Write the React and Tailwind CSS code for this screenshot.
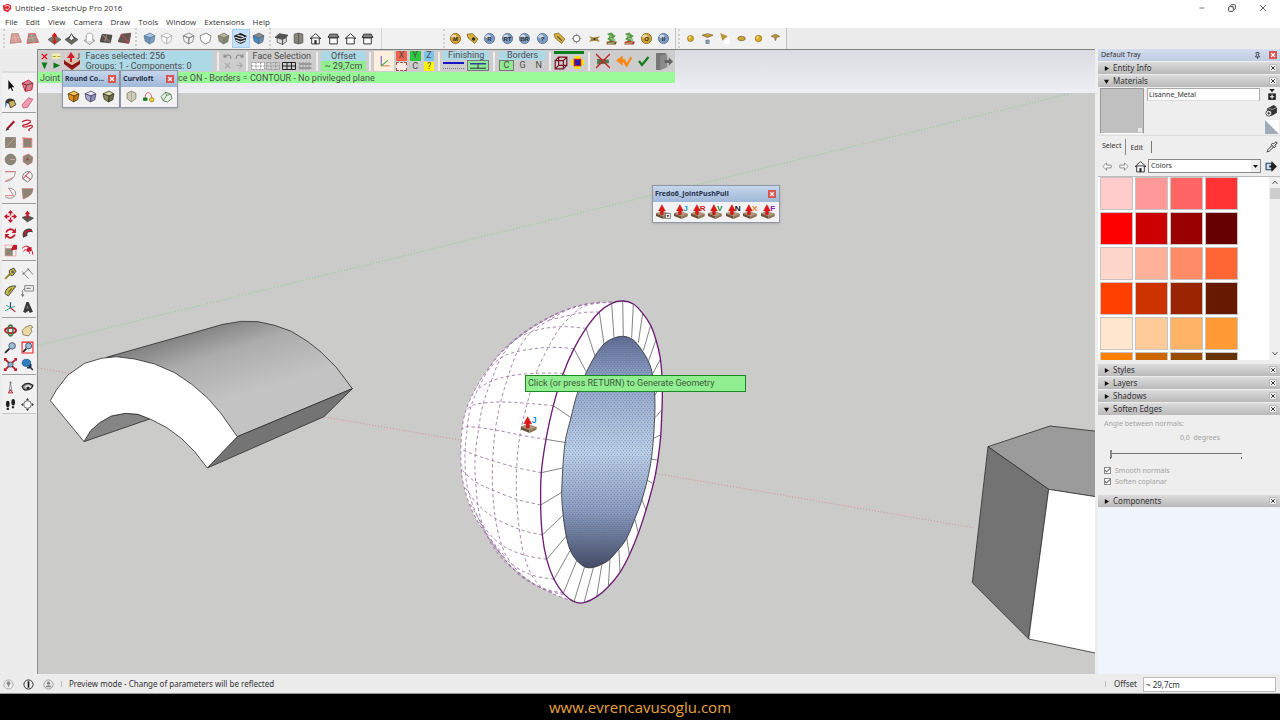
import React, { useState } from 'react';
import { X, Check, Pin, Undo, Redo, ArrowRight, Pipette, Minus, Copy } from 'lucide-react';

const Icon = ({ children, className = 'w-[13px] h-[13px]' }) => (
  <svg viewBox="0 0 12 12" className={`${className} shrink-0`} fill="none" aria-hidden="true">
    {children}
  </svg>
);

const ToolButton = ({ label, active, children }) => (
  <button
    type="button"
    title={label}
    aria-label={label}
    className={`w-4 h-[17px] shrink-0 flex items-center justify-center ${active ? 'bg-[#c5e0f8] outline outline-[#a5cdf0]' : ''}`}
  >
    {children}
  </button>
);

/* ---------- shared icon shapes ---------- */

const Patch = ({ fill = '#77756b', line = '#b33', children }) => (
  <Icon>
    <path d="M2.500 1.500L8.500 1.500 11.500 9.500 1 10.500z" fill={fill} stroke={line} strokeWidth=".6" />
    <path d="M4.500 2l2.500 8M2 6l8-1" stroke="#ffffff66" strokeWidth=".5" />
    {children}
  </Icon>
);

const Cube = ({ top = '#fff', left = '#eee', right = '#ddd', line = '#555' }) => (
  <Icon>
    <g stroke={line} strokeWidth=".7" strokeLinejoin="round">
      <path d="M1 3.500L6.500 1l4.500 2.500-4.500 2z" fill={top} />
      <path d="M1 3.500l5.500 2L6 11 2 8.500z" fill={left} />
      <path d="M6.500 5.500L11 3.500l-1 5.500-4 2z" fill={right} />
    </g>
  </Icon>
);

const House = ({ fill = '#fff', door = '#222', flat }) => (
  <Icon>
    <path d={flat ? 'M1 5l1.500-3h7L11 5z' : 'M1 6l5-4.500L11 6z'} fill={flat ? '#888' : fill} stroke="#333" strokeWidth=".9" />
    <path d="M2.500 5.500h7V11h-7z" fill={fill} stroke="#333" strokeWidth=".9" />
    {door && <path d="M5 7.500h2V11H5z" fill={door} />}
  </Icon>
);

const Ball = ({ letter, gold }) => (
  <Icon>
    <circle cx="6" cy="6" r="4.700" fill={gold ? '#d0a030' : '#7d9cc4'} stroke={gold ? '#7b5a10' : '#4a6284'} strokeWidth=".7" />
    <ellipse cx="4.500" cy="4" rx="2.400" ry="1.700" fill="#ffffff99" />
    <text x="6" y="8" textAnchor="middle" fontSize="5.500" fontWeight="bold" fontFamily="Liberation Sans, sans-serif" fill="#2a2a2a">{letter}</text>
  </Icon>
);

const Dot = ({ r = 2.8 }) => (
  <Icon>
    <circle cx="6" cy="6" r={r} fill="#d8a922" stroke="#86681a" strokeWidth=".6" />
    <circle cx="5.200" cy="5" r="1" fill="#fff0a0" />
  </Icon>
);

const Scatter = ({ low = '#7a5a2a' }) => (
  <Icon>
    <path d="M2 1.500l4-1 2 2 2 1-2 2 2 2-5 1-3-2 2-2z" fill="#5a9b4c" />
    <path d="M1.500 9l4-1 5.500 1-1 2.500H1.500z" fill={low} />
    <path d="M3 3l3 1M5 6l4 1M2.500 10.500l6-.5" stroke="#d5eab8" strokeWidth=".7" />
  </Icon>
);

const PushPull = ({ letter, color, className }) => (
  <Icon className={className || 'w-[15px] h-[15px]'}>
    <path d="M0 7.500l5-1.500L11 8 6 10z" fill="#b59a7c" stroke="#6b543f" strokeWidth=".3" />
    <path d="M0 7.500L6 10v2L0 9.500z" fill="#6b5038" />
    <path d="M6 10l5-2v1.700L6 12z" fill="#8d7256" />
    <path d="M3.700 8.500V5.500H2L4.700.500 7.500 5.500H5.800v3z" fill="#e01818" stroke="#a00" strokeWidth=".3" />
    {letter ? (
      <text x="9.300" y="5.200" textAnchor="middle" fontSize="6.500" fontWeight="bold" fontFamily="Liberation Sans, sans-serif" fill={color}>{letter}</text>
    ) : (
      <>
        <path d="M7.500 7.500h4v4h-4z" fill="#fff" stroke="#333" strokeWidth=".5" />
        <path d="M8.300 9h2.400L9.500 10.600z" fill="#111" />
      </>
    )}
  </Icon>
);

/* ---------- top toolbar ---------- */

const Grip = () => <span className="w-0.5 h-[19px] border-l-2 border-dotted border-[#d0d0d0]" />;
const Divider = () => <span className="w-px h-[17px] bg-[#a8a8a8]" />;

const TopToolbar = () => (
  <div className="h-[21px] flex bg-[#ececec]" role="toolbar" aria-label="Main toolbar">
    <div className="w-[382px] pl-[3px] flex items-center bg-[#f1f1f1] border-r border-[#d2d2d2]">
      <Grip />
      <div className="w-[33px] ml-0.5 flex justify-between">
        <ToolButton label="From Contours"><Patch fill="#d99c94" line="#a77" /></ToolButton>
        <ToolButton label="From Scratch"><Patch fill="#a09488" line="#d33" /></ToolButton>
      </div>
      <span className="mx-[3px]"><Divider /></span>
      <div className="w-[86px] flex justify-between">
        <ToolButton label="Smoove"><Icon><path d="M0 7l6-4 6 4-6 4.500z" fill="#77756b" stroke="#444" strokeWidth=".5" /><path d="M6 9V2M4 4l2-2.500L8 4M4.500 8L6 10l1.500-2" stroke="#d11" strokeWidth="1.300" /></Icon></ToolButton>
        <ToolButton label="Stamp"><Icon><path d="M0 7l6-4 6 4-6 4.500z" fill="#6a685f" stroke="#333" strokeWidth=".5" /><path d="M3.500 6L6 1.500 8.500 6 6 8z" fill="#eee" stroke="#222" strokeWidth=".7" /></Icon></ToolButton>
        <ToolButton label="Drape"><Icon><path d="M1 8l5-3 5 3-5 3.500z" fill="#ddd" stroke="#777" strokeWidth=".6" /><path d="M3 8V3c1-2.500 5-2.500 6 0v5" fill="#fff" stroke="#999" strokeWidth=".8" /></Icon></ToolButton>
        <ToolButton label="Add Detail"><Icon><path d="M2 2l9 1-1.500 7L0 9z" fill="#55534b" stroke="#222" strokeWidth=".6" /><path d="M2 2l7.500 8M6 2.500L4.500 9.500" stroke="#c99" strokeWidth=".7" /></Icon></ToolButton>
        <ToolButton label="Flip Edge"><Icon><path d="M3 2l9-1-2 9.500L0 9z" fill="#605a55" stroke="#733" strokeWidth=".6" /><path d="M3 2l7 8" stroke="#c44" /></Icon></ToolButton>
      </div>
      <span className="ml-[3px] mr-1"><Grip /></span>
      <div className="w-[33px] flex justify-between">
        <ToolButton label="X-Ray"><Cube top="#a9c3dc" left="#6f92b5" right="#7fa1c3" line="#5a7a9a" /></ToolButton>
        <ToolButton label="Back Edges"><Cube top="#fff" left="#fafafa" right="#f4f4f4" line="#aaa" /></ToolButton>
      </div>
      <span className="mx-[3px]"><Divider /></span>
      <div className="w-[86px] flex justify-between">
        <ToolButton label="Wireframe"><Cube top="none" left="none" right="none" line="#777" /></ToolButton>
        <ToolButton label="Hidden Line"><Icon><path d="M1 3.500L6.500 1 11 3.500 10 9l-4 2-4-2.500z" fill="#fff" stroke="#777" strokeWidth=".8" /></Icon></ToolButton>
        <ToolButton label="Shaded"><Cube top="#b5b5a0" left="#8f8f7c" right="#84846f" line="#77776a" /></ToolButton>
        <ToolButton label="Shaded With Textures" active>
          <Icon>
            <path d="M0 3.500L6 1l5.500 2.500-1 5.500L6 11 1.500 8.500z" fill="#222" />
            <path d="M3 2.800l6 1.700M1 4.800l5.300 1.700 4.700-1.700M1.500 7.500L6 9.300l4.500-1.600" stroke="#dfe8ef" strokeWidth="1" />
          </Icon>
        </ToolButton>
        <ToolButton label="Monochrome"><Cube top="#8f8f86" left="#3d8ad0" right="#6f8fae" line="#567" /></ToolButton>
      </div>
      <span className="ml-[3px] mr-0.5"><Grip /></span>
      <div className="w-[103px] flex justify-between">
        <ToolButton label="Iso"><Icon><path d="M0 5l4-3.500L12 3 8.500 6.500z" fill="#555" stroke="#333" strokeWidth=".6" /><path d="M2 5.500l5 1.500v4.500l-5-2zM7 7l3.500-2v4L7 11.500z" fill="#ddd" stroke="#444" strokeWidth=".7" /></Icon></ToolButton>
        <ToolButton label="Top"><Icon><path d="M2 2l4-1 4 1v8l-4 1-4-1z" fill="#85857b" stroke="#555" strokeWidth=".7" /><path d="M6 1v10" stroke="#555" strokeWidth=".8" /></Icon></ToolButton>
        <ToolButton label="Front"><House /></ToolButton>
        <ToolButton label="Right"><House flat door="" /></ToolButton>
        <ToolButton label="Back"><House door="" /></ToolButton>
        <ToolButton label="Left"><House flat door="" /></ToolButton>
      </div>
    </div>
    <div className="w-[294px] pl-[61px] flex items-center border-r border-[#c4c4c4] bg-[#f1f1f1]">
      <Grip />
      <div className="w-[225px] ml-0.5 flex justify-between">
        <ToolButton label="Material"><Ball letter="M" gold /></ToolButton>
        <ToolButton label="Options"><Icon><path d="M1 2l5-.5 5 5-3 4-6-5z" fill="#d9b23a" stroke="#775c16" strokeWidth=".7" /><circle cx="7" cy="6.500" r="1.600" fill="#333" /></Icon></ToolButton>
        <ToolButton label="Render"><Ball letter="R" /></ToolButton>
        <ToolButton label="Real-time"><Ball letter="RT" /></ToolButton>
        <ToolButton label="Batch"><Ball letter="BR" /></ToolButton>
        <ToolButton label="Help"><Ball letter="?" /></ToolButton>
        <ToolButton label="Tag"><Icon><path d="M1 2l4-1 6 5.500-3 4-6-5z" fill="#d9b23a" stroke="#775c16" strokeWidth=".7" /><path d="M4 4l4 4" stroke="#444" /></Icon></ToolButton>
        <ToolButton label="Sphere"><Icon><circle cx="6" cy="6" r="3" fill="#f8f8f8" stroke="#777" /><path d="M6 1.500v1.500M6 9v1.500M1.500 6H3M9 6h1.500" stroke="#888" strokeWidth=".8" /></Icon></ToolButton>
        <ToolButton label="Plane"><Icon><path d="M1 4l4 1 6-1-2 2.500L11 9 6 8 1 9l2-2.500z" fill="#a8843a" /><circle cx="6" cy="6.500" r="1" fill="#333" /></Icon></ToolButton>
        <ToolButton label="Scatter"><Scatter /></ToolButton>
        <ToolButton label="Proxy"><Scatter low="#b0402a" /></ToolButton>
        <ToolButton label="Light"><Ball letter="O" gold /></ToolButton>
        <ToolButton label="Frame buffer"><Ball letter="II" /></ToolButton>
      </div>
    </div>
    <div className="w-[111px] pl-0.5 flex items-center border-r border-[#c4c4c4] bg-[#f1f1f1]">
      <Grip />
      <div className="w-[101px] ml-0.5 flex justify-between">
        <ToolButton label="Omni light"><Dot /></ToolButton>
        <ToolButton label="Rectangle light"><Icon><path d="M1 3l5-1.500L11 3 6 5z" fill="#c9a33a" stroke="#6a5420" strokeWidth=".6" /><path d="M4.500 7.500h3v3h-3z" fill="#8fa6c6" stroke="#567" strokeWidth=".6" /></Icon></ToolButton>
        <ToolButton label="Spot light"><Icon><path d="M6 6l5-1v6H6z" fill="#fff" /><path d="M2 1l7 3-5 4z" fill="#b8963a" /></Icon></ToolButton>
        <ToolButton label="Dome light"><Icon><ellipse cx="6" cy="6" rx="3.500" ry="2" fill="#c8a63a" stroke="#6a5420" strokeWidth=".6" /></Icon></ToolButton>
        <ToolButton label="Sphere light"><Dot r={3} /></ToolButton>
        <ToolButton label="IES light"><Icon><path d="M2 4l4-2 4 2-3 1-1 3-1-3z" fill="#b8963a" stroke="#6a5420" strokeWidth=".5" /></Icon></ToolButton>
      </div>
    </div>
  </div>
);

/* ---------- left toolbar ---------- */

const R = '#c4182c';
const leftGroups = [
  [
    ['Select', <path d="M4 1v9l2-2 1.500 3 1-.5L7 7.500h2.500z" fill="#111" />],
    ['Make Component', <><path d="M1 4l6-3 4 3-1 6-6 1.500z" fill="#d5808a" stroke={R} strokeWidth=".8" /><path d="M1 4l4 1.500 6-1.500M5 5.500L4 11" stroke="#7c2030" strokeWidth=".8" /></>],
    ['Paint Bucket', <><path d="M1 6c1-4 5-5 9-2l-2 4z" fill="#3a3a3a" /><path d="M4 5l5-1 2 4-5 3z" fill="#c9b45a" stroke="#222" strokeWidth=".7" /><path d="M1 6v5l2-4z" fill="#3b87c4" /></>],
    ['Eraser', <path d="M1 8l6-6.500L11 3 6 10.500l-4 .5z" fill="#f09ab0" stroke="#b85870" strokeWidth=".7" />],
  ],
  [
    ['Line', <><path d="M3 9L9.500 2" stroke={R} strokeWidth="2" /><path d="M1.500 11l1-3L5 9.500z" fill="#333" /><path d="M4 8l5-5" stroke="#333" strokeWidth=".7" /></>],
    ['Freehand', <path d="M1 2.500C5 0 11 1 8 3.500S0 5 2 7s8-3 8.500-.5S5 9 8 11" stroke={R} strokeWidth="1.100" />],
    ['Rectangle', <><path d="M1 1h10v10H1z" fill="#8c8677" /><path d="M2 10l8-8" stroke="#d99" strokeWidth=".8" /></>],
    ['Rotated Rectangle', <><path d="M2 2h8v8.500H2z" fill="#8c8677" stroke="#e88" strokeWidth=".8" /><path d="M1 1.500l9 2" stroke="#d55" strokeWidth=".7" /></>],
    ['Circle', <><circle cx="6" cy="6" r="5" fill="#8c8677" stroke="#68645a" strokeWidth=".5" /><path d="M6 6h4" stroke="#daa" strokeWidth=".9" /></>],
    ['Polygon', <><path d="M2 3l5-2 4 3-1 5-4 2-4-3z" fill="#8c8677" stroke="#c77" strokeWidth=".7" /><circle cx="6" cy="6" r=".9" fill={R} /></>],
    ['Arc', <><path d="M1 1.500h9.500C10 7 7 10 1 10.500" stroke="#777" strokeWidth=".7" /><path d="M1 1.500h9M1 10.500L8 7" stroke="#e0707a" strokeWidth=".8" /></>],
    ['2 Point Arc', <><path d="M1.500 8C1 3 5 1 8 1.500c3 2 3 5 1 7L6 11z" stroke="#555" strokeWidth=".7" /><path d="M2 8l6-6.500M4 5l5 4" stroke={R} strokeWidth=".8" /></>],
    ['3 Point Arc', <><path d="M4 1c6 0 8 4 6 7s-6 3-9 1" stroke="#777" strokeWidth=".7" /><path d="M4 1l5 7H1" stroke="#e0707a" strokeWidth=".8" /></>],
    ['Pie', <path d="M1 1.500h10C11 7 7 9 2 11z" fill="#8c8677" stroke="#c77" strokeWidth=".7" />],
  ],
  [
    ['Move', <><path d="M6 1v10M1 6h10" stroke={R} strokeWidth="1.200" strokeDasharray="4 2" /><path d="M6 0l2.500 3h-5zM6 12l2.500-3h-5zM0 6l3-2.500v5zM12 6L9 3.500v5z" fill={R} /></>],
    ['Push/Pull', <><path d="M1 7l5-2 5.500 2.500L6 11z" fill="#5c584d" stroke="#333" strokeWidth=".5" /><path d="M5 7.500V4H3.500L6 .5 8.500 4H7v3.500z" fill={R} /></>],
    ['Rotate', <><path d="M2 5c1-3 5-4 7-1.500M10 7c-1 3-5 4-7 1.500" stroke={R} strokeWidth="1.700" /><path d="M11 1v4.500H7zM1 11V6.500h4z" fill={R} /></>],
    ['Follow Me', <><path d="M2 10C0 4 5 0 10 2l1 3C7 4 5 5 6 8z" fill="#444" /><path d="M3 8c0-4 3-5 7-5" stroke={R} strokeWidth="1.300" /></>],
    ['Scale', <><path d="M1 4h7v7H1z" fill="#8c8677" /><path d="M1 1h10v10H1z" stroke="#d88" strokeWidth=".6" /><path d="M6 6l2.500-5H12v4z" fill={R} /></>],
    ['Offset', <><path d="M1 4c4-4 9-2 10 6M2 7c2-3 5-2 6 2" stroke={R} strokeWidth=".9" /><path d="M5 7l1-4h4L9 7z" fill={R} /></>],
  ],
  [
    ['Tape Measure', <><path d="M5 3l4-2 2 3-3 4-3-1z" fill="#c8bd40" stroke="#444" strokeWidth=".9" /><path d="M1 11l5-5" stroke="#8f8730" strokeWidth="1.700" /><circle cx="8" cy="4.500" r="1.200" fill="#555" /></>],
    ['Dimension', <path d="M2 6.500L7 2M1 4l6 7M6 1l5 6M1 7l2-1M8 3L6 2" stroke="#666" strokeWidth=".7" />],
    ['Protractor', <path d="M1 9C1 4 6 1 11 2L4 11z M4 8l3-4" fill="#c8bd40" stroke="#444" strokeWidth=".9" />],
    ['Text', <><path d="M3.500 1.500h8v5h-8zM3.500 4L1.500 6v5" stroke="#666" strokeWidth=".7" /><path d="M5 4h4M.5 9.500l1 2 1-2" stroke="#555" strokeWidth=".8" /></>],
    ['Axes', <><path d="M6 7V1" stroke="#248" strokeWidth="1" /><path d="M6 6.500L10.500 10" stroke={R} /><path d="M6 6.500L1 9M2 4l4 2 4-1" stroke="#297" strokeWidth=".8" /></>],
    ['3D Text', <><path d="M5 1h2l4 9-3 1-1-2-3 2-2-1z" fill="#3b3b3b" /><path d="M6 4l1 3H5z" fill="#888" /></>],
  ],
  [
    ['Orbit', <><ellipse cx="6" cy="6" rx="5" ry="2.500" stroke={R} strokeWidth="1.800" /><ellipse cx="6" cy="6" rx="2.300" ry="5" stroke="#387a48" strokeWidth="1.500" /></>],
    ['Pan', <path d="M2 10l-1-4 3-3 5-2 2 2-2 1 1 3-3 4z" fill="#ead9a4" stroke="#776a44" strokeWidth=".7" />],
    ['Zoom', <><path d="M1 11l4-4" stroke="#222" strokeWidth="1.600" /><circle cx="7.500" cy="4.500" r="3" fill="#9bbdd6" stroke="#557" strokeWidth=".9" /></>],
    ['Zoom Window', <><path d="M1 1h10v10H1z" stroke="#e22" strokeWidth="1" /><path d="M2 10l3-3" stroke="#222" strokeWidth="1.500" /><circle cx="7" cy="4.500" r="2.800" fill="#9bbdd6" stroke="#446" strokeWidth=".8" /></>],
    ['Zoom Extents', <><path d="M1 1l10 10M11 1L1 11" stroke={R} strokeWidth="1.600" /><circle cx="6" cy="6" r="2.400" fill="#8fb0c8" stroke="#345" strokeWidth=".7" /><path d="M0 0h3L0 3zM12 0v3L9 0zM0 12V9l3 3zM12 12H9l3-3z" fill={R} /></>],
    ['Previous', <><ellipse cx="5" cy="4.500" rx="4" ry="3.300" fill="#2d7dc0" stroke="#1d507c" strokeWidth=".6" /><path d="M7 7l4 4M9 5.500V9H5.500" stroke="#234" strokeWidth="1.400" /></>],
  ],
  [
    ['Position Camera', <><circle cx="6" cy="1.500" r="1" fill="#777" /><path d="M6 2l1.300 7H4.700z" fill="#fff" stroke="#777" strokeWidth=".7" /><path d="M4 11l2-3 2 3z" stroke={R} strokeWidth=".9" /></>],
    ['Look Around', <><path d="M1 5c3-3.500 7-3 10-1-1 4-7 6-9 3z" fill="#999" stroke="#222" strokeWidth="1.100" /><path d="M4 6c1-2 4-2 5 0" stroke="#fff" /><circle cx="6.500" cy="6.500" r="1.300" fill="#222" /></>],
    ['Walk', <><ellipse cx="3.500" cy="5.500" rx="1.700" ry="3" fill="#222" /><ellipse cx="8.500" cy="4" rx="1.700" ry="3" fill="#222" /><path d="M2.500 9h2v2h-2zM7.300 7.500h2v2h-2z" fill="#222" /></>],
    ['Section Plane', <><circle cx="6" cy="6" r="3.500" fill="#fff" stroke="#555" strokeWidth=".8" /><path d="M6 0l1.500 2h-3zM6 12l1.500-2h-3zM0 6l2-1.500v3zM12 6l-2-1.500v3z" fill="#333" /></>],
  ],
];

const LeftToolbar = () => (
  <div className="w-[38px] shrink-0 pt-[22px] pl-0.5 bg-[#ececec] border-r border-[#8e8e8e]" role="toolbar" aria-label="Large tool set">
    <div className="w-[34px] bg-[#f1f1f1] border-b border-[#c8c8c8] border-t-2 border-t-[#dcdcdc]">
      {leftGroups.map((group, i) => (
        <div key={i} className={`grid grid-cols-2 pt-1 ${i < 5 ? 'border-b border-[#a0a0a0] pb-px' : ''}`}>
          {group.map(([label, art]) => (
            <ToolButton key={label} label={label}><Icon>{art}</Icon></ToolButton>
          ))}
        </div>
      ))}
    </div>
  </div>
);

/* ---------- 3D scene ---------- */

// Catmull-Rom through "x,y x,y ..." points, returned as a cubic path
const smooth = (points, closed) => {
  const p = points.split(' ').map((s) => s.split(',').map(Number));
  const n = p.length;
  const at = (i) => (closed ? p[(i + n) % n] : p[Math.max(0, Math.min(n - 1, i))]);
  let d = `M${p[0]}`;
  for (let i = 0; i < (closed ? n : n - 1); i++) {
    const [a, b, c, e] = [at(i - 1), at(i), at(i + 1), at(i + 2)];
    d += `C${b[0] + (c[0] - a[0]) / 6},${b[1] + (c[1] - a[1]) / 6} ${c[0] - (e[0] - b[0]) / 6},${c[1] - (e[1] - b[1]) / 6} ${c}`;
  }
  return d;
};

const rim = smooth('548,33 580,42 608,70 632,106 648,150 660,200 666,260 667,320 665,380 662,440 655,500 645,560 632,612 618,660 595,730 568,795 540,847 505,890 470,920 432,938 402,935 370,910 342,868 320,808 307,735 302,645 304,548 318,448 340,347 368,255 402,176 438,115 478,66 515,40', true);
const hole = smooth('550,139 580,150 605,180 628,220 640,270 645,340 642,420 635,500 622,570 604,635 585,685 560,745 530,785 500,815 455,833 425,825 395,790 378,735 367,650 366,580 375,460 393,383 412,310 440,245 465,198 492,162 520,145', true);
const spokes = 'M548 33L550 139M515 40L522 143M478 66L492 162M438 115L465 198M402 176L440 248M370 250L415 300M340 347L393 383M318 448L378 458M304 548L368 534M302 645L367 606M307 735L369 676M320 808L380 737M342 868L390 782M370 910L410 812M402 935L434 830M432 938L460 833M470 920L485 826M505 890L510 806M540 847L537 780M568 795L560 742M595 730L585 688M618 660L604 625M637 580L618 568M653 510L636 508M661 435L641 445M665 360L645 383M666 280L643 318M660 210L636 255M648 150L626 212M632 106L610 182M608 70L595 158M580 42L575 143';
const shell = smooth('515,36 440,42 370,62 290,105 220,155 160,215 110,290 78,360 65,430 63,520 72,590 100,670 150,750 210,825 280,880 340,912 402,935');
const parallels = [
  '478,66 425,68 380,78 320,92',
  '438,115 370,110 300,118 235,142 205,165',
  '402,176 325,172 230,185 180,205 145,240',
  '370,250 288,250 208,258 150,275 110,300',
  '340,347 262,340 182,336 110,342 80,358',
  '318,448 240,435 166,420 85,410 68,418',
  '304,548 230,533 158,512 105,495 68,480',
  '302,645 230,628 158,600 105,575 66,540',
  '307,735 238,718 166,685 115,645 75,592',
  '320,808 252,795 185,765 135,715 90,640',
  '342,868 275,855 215,822 160,765 115,690',
  '370,910 310,895 250,865 200,815 150,745',
];
const meridians = [
  '515,36 430,50 365,108 325,172 288,250 262,340 240,435 230,533 230,628 238,718 252,795 275,855 310,895 370,915',
  '480,36 400,52 320,95 270,130 232,185 205,258 182,336 166,420 158,512 158,600 166,685 185,765 215,822 270,875 340,910',
  '440,42 340,75 240,135 185,200 155,270 130,340 115,420 105,510 108,590 118,670 145,745 190,810 260,870',
  '370,62 280,110 205,165 160,215 115,295 90,360 80,430 75,500 80,580 100,650 140,730 195,800',
];

const Scene = () => (
  <svg viewBox="38 50 1057 624" preserveAspectRatio="xMidYMid slice" className="absolute inset-0 w-full h-full">
    <defs>
      <linearGradient id="sky" x1="0" y1="0" x2="0" y2="1">
        <stop offset="0" stopColor="#dadce1" />
        <stop offset="1" stopColor="#eeeff4" />
      </linearGradient>
      <linearGradient id="bowl" x1="0" y1="0" x2="0" y2="1">
        <stop offset="0" stopColor="#5f6c90" />
        <stop offset=".2" stopColor="#92a5c6" />
        <stop offset=".5" stopColor="#bcd0e4" />
        <stop offset=".75" stopColor="#8c9cbe" />
        <stop offset="1" stopColor="#444b62" />
      </linearGradient>
      <linearGradient id="vault" gradientUnits="userSpaceOnUse" x1="370" y1="90" x2="440" y2="310">
        <stop offset="0" stopColor="#808080" />
        <stop offset=".4" stopColor="#acacac" />
        <stop offset="1" stopColor="#c3c3c3" />
      </linearGradient>
      <pattern id="dots" width="9" height="12" patternUnits="userSpaceOnUse">
        <path d="M0 0h3v3H0zM4.500 6h3v3h-3z" fill="#3c52a0" fillOpacity=".4" />
      </pattern>
    </defs>
    <rect x="-1000" y="-500" width="3200" height="1800" fill="#cbcbca" />
    <rect x="-1000" y="50" width="3200" height="43" fill="url(#sky)" />
    <path d="M38 345L1068 94" stroke="#86cf86" strokeDasharray="1 2" />
    <path d="M38 368L975 528" stroke="#d88f8f" strokeDasharray="1 2" />

    <g transform="translate(38 310) scale(.33333)" stroke="#333" strokeWidth="2.500" strokeLinejoin="round">
      <path d="M205 142L555 43L610 34 660 35 710 46 760 64 810 95 850 127 895 172 943 236L598 380 300 200z" fill="url(#vault)" />
      <path d="M598 380L943 236L858 320L508 474z" fill="#747474" />
      <path d="M138 395L158 362 185 338 220 318 262 310 300 313 338 326z" fill="#858585" />
      <path d="M37 272L55 240 90 195 140 160 190 145 235 140 290 147 350 162 410 188 460 222 510 265 550 312 598 380 508 474 470 425 430 385 385 352 338 328 300 313 262 310 220 318 185 338 158 362 138 395z" fill="#fff" />
    </g>

    <g transform="translate(440 290) scale(.33333)" strokeLinejoin="round">
      <path d={shell} fill="#fff" />
      <g stroke="#9c74a3" strokeWidth="2.600" strokeDasharray="10 8" fill="none">
        <path d={shell} />
        {parallels.map((p) => <path key={p} d={smooth(p)} />)}
        {meridians.map((p) => <path key={p} d={smooth(p)} />)}
      </g>
      <path d={rim} fill="#fff" stroke="#6d1a75" strokeWidth="4" />
      <path d={spokes} stroke="#555" strokeWidth="2.200" />
      <path d={hole} fill="url(#bowl)" stroke="#333" strokeWidth="2.500" />
      <path d={hole} fill="url(#dots)" />
    </g>

    <g transform="translate(960 400) scale(.33333)" stroke="#333" strokeWidth="2.500" strokeLinejoin="round">
      <path d="M84 140L270 78 420 95V292L266 268z" fill="#9b9b9b" />
      <path d="M84 140L266 268 206 717 37 548z" fill="#737373" />
      <path d="M266 268L420 292V762L206 717z" fill="#fff" />
    </g>
  </svg>
);

/* ---------- parameter strip over the viewport ---------- */

const Sep = ({ className = '' }) => <span className={`w-0.5 h-[19px] shrink-0 bg-[#ededed] ${className}`} />;

const ParamStrip = () => (
  <div className="relative w-[637px] font-[Roboto,sans-serif] text-[9px] leading-[10px] text-[#4c4c4c]">
    <div className="h-[22px] flex items-center bg-[#cdcdcd]">
      <div className="w-[25px] grid grid-cols-2 justify-items-center">
        <button type="button" aria-label="Close"><X className="w-[9px] h-[9px] text-red-600" strokeWidth={3} /></button>
        <button type="button" aria-label="Minimize"><Icon className="w-[9px] h-[9px]"><path d="M0 2h11v7H0z" fill="#f0efb0" /><path d="M1 6h4M7 6h4" stroke="#b0a020" strokeWidth="1.500" /></Icon></button>
        <button type="button" aria-label="Down"><Icon className="w-[9px] h-[9px]"><path d="M2 2h8L6 11z" fill="#087a18" /></Icon></button>
        <button type="button" aria-label="Right"><Icon className="w-[9px] h-[9px]"><path d="M2 2v8l9-4z" fill="#087a18" /></Icon></button>
      </div>
      <div className="w-[19px] h-5 flex justify-center bg-[#d4cbc9]">
        <svg viewBox="0 0 18 20" className="w-[18px] h-5" aria-hidden="true">
          <path d="M1 9l8 5 8-5v4l-8 6-8-6z" fill="#8d1715" />
          <path d="M2 10l7 4 7-4-4-2H6z" fill="#d8bda6" />
          <path d="M7 11V7H4l4-6 4 6H9v4z" fill="#d11c2a" />
          <path d="M16 2v5c0 1-2 1-2 0" stroke="#555" fill="none" />
        </svg>
      </div>
      <div className="w-[133px] h-5 pl-1 bg-[#add8e6]">
        <p>Faces selected: 256</p>
        <p>Groups: 1 - Components: 0</p>
      </div>
      <Sep className="ml-1" />
      <div className="w-[27px] pl-0.5 grid grid-cols-2 justify-items-center text-[#8b8b8b]">
        <button type="button" aria-label="Undo"><Undo className="w-[9px] h-[9px]" strokeWidth={3} /></button>
        <button type="button" aria-label="Redo"><Redo className="w-[9px] h-[9px]" strokeWidth={3} /></button>
        <button type="button" aria-label="Clear"><X className="w-[9px] h-[9px] text-[#aaa]" strokeWidth={3} /></button>
        <button type="button" aria-label="Last"><ArrowRight className="w-[9px] h-[9px] text-[#aaa]" strokeWidth={3} /></button>
      </div>
      <Sep className="mr-[3px]" />
      <div className="w-[66px]">
        <p className="pl-0.5">Face Selection</p>
        <div className="flex justify-between pr-1">
          {['#fff', '#bbb', '#222', '#999'].map((c, i) => (
            <button key={c} type="button" aria-label={`Selection mode ${i + 1}`}>
              <svg viewBox="0 0 14 10" className="w-3.5 h-[10px]" aria-hidden="true">
                <path d={i === 3 ? 'M1 2h12v2H1zM1 6h12v2H1z' : 'M.5 1.500h13v7H.5zM.5 5h13M5 1.500v7M9.500 1.500v7'} fill={i === 0 ? '#fff' : i === 3 ? '#999' : 'none'} stroke={i === 2 ? '#222' : '#999'} strokeWidth="1" strokeDasharray={i === 2 ? undefined : '2 1'} />
              </svg>
            </button>
          ))}
        </div>
      </div>
      <Sep className="mr-[3px]" />
      <div className="w-[46px] h-5 flex flex-col text-center">
        <span className="bg-[#add8e6]">Offset</span>
        <button type="button" className="bg-[#90f090] leading-[10px]">~ 29,7cm</button>
      </div>
      <Sep className="mx-[3px]" />
      <button type="button" aria-label="Local axes" className="w-5 h-5 bg-[#fdeedd] flex items-center justify-center">
        <Icon><path d="M3 1v9" stroke="#6464c8" /><path d="M3 10h8" stroke="#c86" /><path d="M3 10l6-5" stroke="#3a3" /></Icon>
      </button>
      <div className="w-[39px] h-5 ml-0.5 grid grid-cols-3 gap-x-[3px] gap-y-px text-center leading-[9px]">
        <button type="button" className="bg-[#f4604e] leading-[9px]">X</button>
        <button type="button" className="bg-[#2ec83e] leading-[9px]">Y</button>
        <button type="button" className="bg-[#7cc4ec] leading-[9px]">Z</button>
        <button type="button" aria-label="No plane" className="bg-[#fbe9e4] border border-dashed border-[#a55]" />
        <button type="button" className="leading-[9px]">C</button>
        <button type="button" className="bg-[#fff700] leading-[9px]">?</button>
      </div>
      <Sep className="ml-1 mr-[3px]" />
      <div className="w-[46px] h-5 flex flex-col">
        <span className="h-[9px] leading-[9px] text-center bg-[#add8e6]">Finishing</span>
        <div className="flex grow gap-[3px]">
          <button type="button" aria-label="Erase" className="grow flex flex-col justify-center gap-1">
            <span className="w-full h-0.5 bg-[#1616c8]" />
            <span className="w-full border-t border-dotted border-[#777]" />
          </button>
          <button type="button" aria-label="Thicken" className="w-[22px] px-0.5 bg-[#8fe69a] border border-[#777] flex items-center">
            <svg viewBox="0 0 18 8" className="w-full h-2" aria-hidden="true">
              <path d="M0 1.500h18" stroke="#2a2a90" strokeWidth="1.500" />
              <path d="M0 6.500h18M9 2v5" stroke="#222" />
            </svg>
          </button>
        </div>
      </div>
      <Sep className="mx-1" />
      <div className="w-12 h-5 flex flex-col">
        <span className="h-[9px] leading-[9px] text-center bg-[#add8e6]">Borders</span>
        <div className="grid grid-cols-3 gap-x-px grow">
          <button type="button" className="bg-[#90e890] border border-[#777] leading-[9px]">C</button>
          <button type="button" className="leading-[9px]">G</button>
          <button type="button" className="leading-[9px]">N</button>
        </div>
      </div>
      <Sep className="mx-[3px]" />
      <div className="w-[30px] h-5 flex flex-col">
        <span className="h-[3px] bg-[#087f18]" />
        <div className="flex justify-between grow items-center">
          <button type="button" aria-label="Bounding box"><Icon className="w-[14px] h-[14px]"><path d="M1 4h7v7H1zM4 1h7v7H4zM1 4l3-3M8 4l3-3M8 11l3-3M1 11l3-3" stroke="#7a1020" strokeWidth="1" /></Icon></button>
          <button type="button" aria-label="Preview"><Icon><path d="M3.500 0h5v3.500H12v5H8.500V12h-5V8.500H0v-5h3.500z" fill="#ffe000" /><path d="M3 3h6v6H3z" fill="#3016b0" stroke="#c01818" strokeWidth="1" /></Icon></button>
        </div>
      </div>
      <Sep className="ml-1 mr-1.5" />
      <div className="w-20 pr-0.5 flex justify-between">
        <button type="button" aria-label="Abort"><Icon className="w-3.5 h-[16px]"><path d="M1 4l10 1v3L1 9z" fill="#477a48" /><path d="M0 0l12 12M12 0L0 12" stroke="#c22" strokeWidth="1.200" /></Icon></button>
        <button type="button" aria-label="Rollback"><Icon className="w-4 h-[16px]"><path d="M0 5.500L5 2v2.500h1.500l1.500 3 3-5 1 1.500-4 7-2.500-4H5v2.500z" fill="#f98712" /></Icon></button>
        <button type="button" aria-label="Execute"><Icon className="w-3 h-[16px]"><path d="M1 6l3 4 6.500-8" stroke="#137a1d" strokeWidth="2.200" /></Icon></button>
        <button type="button" aria-label="Exit"><Icon className="w-[17px] h-[17px]"><path d="M0 0h7v10l-4 2H0z" fill="#777" /><path d="M3 2l5-1v9l-5 2z" fill="#8b8b8b" /><path d="M6 5h3V3l3 3-3 3V7H6z" fill="#666" /></Icon></button>
      </div>
    </div>
    <div className="h-[11px] flex items-center pl-0.5 bg-[#98fb98] whitespace-nowrap">
      <span className="w-[138px]">Joint</span>
      <span>ce ON - Borders = CONTOUR - No privileged plane</span>
    </div>
  </div>
);

/* ---------- floating tool windows ---------- */

const FloatingWindow = ({ title, className, children }) => (
  <section aria-label={title} className={`absolute bg-[#f2f2f2] border border-[#8d97a5] shadow ${className}`}>
    <header className="h-4 pl-0.5 pr-[3px] flex items-center justify-between bg-linear-to-b from-[#c6d6ec] to-[#9fb8d8]">
      <h2 className="text-[7px] font-bold leading-4 text-[#26324a] whitespace-nowrap">{title}</h2>
      <button type="button" aria-label={`Close ${title}`} className="w-2 h-2 bg-[#d9534f] flex items-center justify-center">
        <X className="w-1.5 h-1.5 text-white" strokeWidth={5} />
      </button>
    </header>
    <div className="flex justify-around px-0.5 pt-px pb-0.5">{children}</div>
  </section>
);

const pushPullModes = [
  ['J', '#1593d6'], ['R', '#c81e2c'], ['V', '#128a3a'], ['N', '#151515'], ['X', '#e8801a'], ['F', '#8a1ab0'],
];

const Viewport = () => (
  <main className="relative grow overflow-hidden border-t border-[#808080]">
    <Scene />
    <ParamStrip />
    <FloatingWindow title="Round Co..." className="left-6 top-5 w-[58px]">
      <ToolButton label="Round corner"><Cube top="#f6c85a" left="#e0951a" right="#c27a10" line="#5e3c08" /></ToolButton>
      <ToolButton label="Sharp corner"><Cube top="#e4e4fa" left="#a8a8d0" right="#8e8eb8" line="#444460" /></ToolButton>
      <ToolButton label="Bevel corner"><Cube top="#dcdcb8" left="#8a8a62" right="#6c6c48" line="#33331c" /></ToolButton>
    </FloatingWindow>
    <FloatingWindow title="Curviloft" className="left-[82px] top-5 w-[58px]">
      <ToolButton label="Loft by spline"><Icon><path d="M2 3l4-2 4 2v5l-4 3-4-3z" fill="#cfcfb8" stroke="#77775e" strokeWidth=".7" /><path d="M6 1v10" stroke="#999" strokeWidth=".6" /></Icon></ToolButton>
      <ToolButton label="Loft along path"><Icon><path d="M3 8C2 1 9 0 9 8" stroke="#d66" strokeWidth=".9" /><path d="M1 7h4v3H1z" fill="#127a1c" /><circle cx="9" cy="9" r="2" fill="#ecd430" stroke="#887710" strokeWidth=".6" /></Icon></ToolButton>
      <ToolButton label="Skinning"><Icon><path d="M1 6l4-4 5 2 1 4-4 3-4-1z" fill="#e4f0e4" stroke="#4a7a54" strokeWidth=".8" /><path d="M5 2l1 3 4-1M6 5L3 10" stroke="#4a7a54" strokeWidth=".7" /></Icon></ToolButton>
    </FloatingWindow>
    <FloatingWindow title="Fredo6_JointPushPull" className="left-[614px] top-[135px] w-32">
      <ToolButton label="Joint Push Pull menu"><PushPull /></ToolButton>
      {pushPullModes.map(([letter, color]) => (
        <ToolButton key={letter} label={`Push Pull ${letter}`}><PushPull letter={letter} color={color} /></ToolButton>
      ))}
    </FloatingWindow>
    <div role="tooltip" className="absolute left-[487px] top-[325px] w-[221px] h-[17px] pl-0.5 bg-[#90ee90] border border-[#1c8a24] font-[Roboto,sans-serif] text-[9px] leading-[15px] text-[#3c5a3c]">
      Click (or press RETURN) to Generate Geometry
    </div>
    <div className="absolute left-[483px] top-[366px]">
      <PushPull letter="J" color="#1593d6" className="w-[17px] h-[17px]" />
    </div>
  </main>
);

/* ---------- tray ---------- */

const SectionBar = ({ title, open }) => (
  <div className="h-3 mb-px pl-1.5 pr-[3px] flex items-center justify-between bg-linear-to-b from-[#dcdcdc] to-[#b9b9b9]">
    <button type="button" aria-expanded={!!open} className="flex items-center gap-1 leading-3">
      <svg viewBox="0 0 6 6" className="w-[5px] h-[5px]" aria-hidden="true">
        <path d={open ? 'M0 1h6L3 6z' : 'M1 0l5 3-5 3z'} fill="#111" />
      </svg>
      {title}
    </button>
    <button type="button" aria-label={`Close ${title}`} className="w-2 h-2 bg-[#ececec] border border-[#bbb] flex items-center justify-center">
      <X className="w-1.5 h-1.5" strokeWidth={4} />
    </button>
  </div>
);

const swatches = [
  '#ffcccc', '#ff9999', '#ff6464', '#ff3333',
  '#ff0000', '#cc0000', '#990000', '#660000',
  '#ffd6cc', '#ffb199', '#ff8c66', '#ff6633',
  '#ff4000', '#cc3300', '#992600', '#661a00',
  '#ffe6cc', '#ffcc99', '#ffb366', '#ff9933',
  '#ff8000', '#cc6600', '#994d00', '#663300',
];

const Materials = () => {
  const [name, setName] = useState('Lisanne_Metal');
  return (
    <div className="h-[276px] flex flex-col">
      <div className="flex pl-0.5 gap-[3px] h-[47px]">
        <div className="w-11 h-[46px] bg-[#c0c0c0] border border-[#999] border-b-white flex items-end justify-end">
          <span className="w-1 h-1 m-px bg-[#e8e8e8]" />
        </div>
        <input
          aria-label="Material name"
          value={name}
          onChange={(e) => setName(e.target.value)}
          className="grow min-w-0 h-[13px] px-px bg-white border border-[#aaa] border-b-[#ddd] text-[7px]"
        />
        <div className="w-[17px] flex flex-col items-center gap-[3px]">
          <button type="button" aria-label="Secondary pane"><Icon><path d="M3 5h7v6H3z" fill="#222" /><path d="M4 1h5L6.500 4z" fill="#222" /><path d="M6.500 6v4M4.500 8h4" stroke="#fff" /></Icon></button>
          <button type="button" aria-label="Create material"><Icon><path d="M2 4l6-3 3 2v5l-5 3-4-2z" fill="#333" /><path d="M3 4l4 1 4-2" stroke="#bbb" strokeWidth=".7" /><circle cx="3.500" cy="8.500" r="2.700" fill="#fff" stroke="#222" strokeWidth=".7" /><path d="M3.500 7v3M2 8.500h3" stroke="#222" strokeWidth=".8" /></Icon></button>
          <button type="button" aria-label="Default material"><Icon className="w-3.5 h-3.5"><path d="M0 0h12v12z" fill="#fff" /><path d="M0 0v12h12z" fill="#9fadba" /></Icon></button>
        </div>
      </div>
      <div className="h-[22px] pl-1 pr-0.5 flex items-center border-t border-[#ddd] text-[7px]">
        <button type="button" className="h-4 pr-1 border-r border-[#888]">Select</button>
        <button type="button" className="h-3 mt-0.5 ml-1 mr-2 leading-3 text-left">Edit</button>
        <span className="w-px h-3 bg-[#777]" />
        <button type="button" aria-label="Sample paint" className="ml-auto"><Pipette className="w-3 h-3 text-[#333]" /></button>
      </div>
      <div className="h-[19px] pl-1 pr-0.5 pb-px flex items-center">
        <button type="button" aria-label="Back" className="w-4"><Icon className="w-[11px] h-[11px]"><path d="M1 6l4-4v2.500h5v3H5V10z" stroke="#888" fill="#fff" /></Icon></button>
        <button type="button" aria-label="Forward" className="w-[14px]"><Icon className="w-[11px] h-[11px]"><path d="M11 6L7 2v2.500H2v3h5V10z" stroke="#888" fill="#fff" /></Icon></button>
        <button type="button" aria-label="In model" className="w-4 flex justify-center"><House /></button>
        <div className="relative grow">
          <select aria-label="Material library" className="appearance-none block w-full h-[14px] pl-0.5 bg-white border border-[#888] text-[7px]">
            <option>Colors</option>
          </select>
          <svg viewBox="0 0 9 12" className="absolute right-px top-px w-[9px] h-3 bg-[#eee] pointer-events-none" aria-hidden="true">
            <path d="M2 5h5L4.500 8z" fill="#111" />
          </svg>
        </div>
        <button type="button" aria-label="Details" className="ml-1"><Icon><path d="M1 3h5v6H1z" fill="#cfe0f0" stroke="#246" strokeWidth="1" /><path d="M4 5h2V1l5 5-5 5V7H4z" fill="#222" /></Icon></button>
      </div>
      <div className="h-[184px] flex bg-white border-t border-[#bbb] overflow-hidden">
        <div className="grow grid grid-cols-[repeat(4,33px)] auto-rows-[33px] gap-0.5 pl-0.5 overflow-hidden">
          {swatches.map((color) => (
            <button key={color} type="button" aria-label={color} className="border border-[#c9c4c4]" style={{ backgroundColor: color }} />
          ))}
        </div>
        <div className="w-[11px] flex flex-col items-center justify-between bg-[#f0f0f0] py-0.5">
          <svg viewBox="0 0 10 20" className="w-[10px] h-5" aria-hidden="true">
            <path d="M2.500 5L5 2l2.500 3" fill="none" stroke="#555" />
            <path d="M0 9h10v11H0z" fill="#cdcdcd" />
          </svg>
          <svg viewBox="0 0 10 8" className="w-[10px] h-2" aria-hidden="true">
            <path d="M2.500 2L5 5l2.500-3" fill="none" stroke="#555" />
          </svg>
        </div>
      </div>
    </div>
  );
};

const SoftCheck = ({ label }) => (
  <label className="h-[11px] flex items-center gap-1">
    <span className="relative w-[7px] h-[7px]">
      <input type="checkbox" defaultChecked disabled className="appearance-none block w-[7px] h-[7px] bg-white border border-[#888]" />
      <Check className="absolute inset-0 w-[7px] h-[7px] text-[#777]" strokeWidth={4} />
    </span>
    {label}
  </label>
);

const SoftenEdges = () => (
  <div className="h-[79px] pt-0.5 pl-1.5 pr-[38px] text-[7px] leading-[11px] text-[#a3a3a3]">
    <label htmlFor="angle">Angle between normals:</label>
    <p className="pt-[3px] pr-[22px] text-right whitespace-pre">0,0  degrees</p>
    <div className="h-[22px] pt-1.5 pl-1.5">
      <input
        id="angle"
        type="range"
        defaultValue={0}
        disabled
        className="appearance-none block w-full h-2 bg-transparent [&::-webkit-slider-runnable-track]:h-px [&::-webkit-slider-runnable-track]:bg-[#777] [&::-webkit-slider-thumb]:appearance-none [&::-webkit-slider-thumb]:w-0.5 [&::-webkit-slider-thumb]:h-2 [&::-webkit-slider-thumb]:-mt-[3px] [&::-webkit-slider-thumb]:bg-[#888]"
      />
      <div className="flex justify-between"><span className="w-px h-0.5 bg-[#666]" /><span className="w-px h-0.5 bg-[#666]" /></div>
    </div>
    <SoftCheck label="Smooth normals" />
    <SoftCheck label="Soften coplanar" />
  </div>
);

const Tray = () => (
  <aside className="w-[185px] shrink-0 pl-[3px] flex flex-col bg-[#eeeeee] text-[8px] text-[#333]">
    <div className="h-3 mb-px px-[3px] flex items-center bg-linear-to-b from-[#d3dded] to-[#bfcde3]">
      <h2 className="text-[7px] leading-3">Default Tray</h2>
      <button type="button" aria-label="Pin" className="ml-auto mr-2"><Pin className="w-[7px] h-[7px]" strokeWidth={3} /></button>
      <button type="button" aria-label="Close tray" className="w-2 h-2 bg-[#d9534f] flex items-center justify-center"><X className="w-1.5 h-1.5 text-white" strokeWidth={5} /></button>
    </div>
    <SectionBar title="Entity Info" />
    <SectionBar title="Materials" open />
    <Materials />
    <SectionBar title="Styles" />
    <SectionBar title="Layers" />
    <SectionBar title="Shadows" />
    <SectionBar title="Soften Edges" open />
    <SoftenEdges />
    <SectionBar title="Components" />
    <div className="grow bg-[#f0f4fc]" />
  </aside>
);

/* ---------- frame ---------- */

const menus = ['File', 'Edit', 'View', 'Camera', 'Draw', 'Tools', 'Window', 'Extensions', 'Help'];

const StatusIcon = ({ label, color, children }) => (
  <button type="button" aria-label={label}>
    <Icon className="w-[11px] h-[11px]">
      <circle cx="6" cy="6" r="5" stroke={color} strokeWidth="1" />
      {children}
    </Icon>
  </button>
);

export default function App() {
  return (
    <div className="min-h-screen flex flex-col bg-[#ececec] font-['Noto_Sans',sans-serif] text-[#333]">
      <header className="bg-white">
        <div className="h-[15px] pl-0.5 pr-3 flex items-center">
          <Icon className="w-[10px] h-[10px]">
            <path d="M1 3l6-2 4 2v4L7 11 2 9z" fill="#d8232f" />
            <path d="M3 4l4-1 2 1v2L7 8 4 7" stroke="#fff" strokeWidth="1" />
          </Icon>
          <h1 className="ml-[3px] font-['Open_Sans',sans-serif] text-[8px]">Untitled - SketchUp Pro 2016</h1>
          <div className="ml-auto flex items-center gap-[22px] text-[#444]">
            <button type="button" aria-label="Minimize"><Minus className="w-2 h-2" strokeWidth={2} /></button>
            <button type="button" aria-label="Restore"><Copy className="w-2 h-2 -scale-x-100" strokeWidth={3} /></button>
            <button type="button" aria-label="Close"><X className="w-[10px] h-[10px]" strokeWidth={2} /></button>
          </div>
        </div>
        <nav className="h-[13px] pl-[5px] flex items-center gap-2 font-['Open_Sans',sans-serif] text-[8px]">
          {menus.map((menu) => <button key={menu} type="button">{menu}</button>)}
        </nav>
      </header>
      <TopToolbar />
      <div className="grow flex">
        <LeftToolbar />
        <Viewport />
        <Tray />
      </div>
      <footer>
        <div className="h-5 pt-px pl-[3px] pr-1 flex items-center border-b border-[#999] text-[8px]">
          <div className="flex gap-[9px]">
            <StatusIcon label="Geo-location" color="#aaa"><path d="M4 4.500a2 2 0 0 1 4 0L6 9z" fill="#888" /></StatusIcon>
            <StatusIcon label="Credits" color="#222"><path d="M6 2.500v7" stroke="#111" strokeWidth="1.800" /></StatusIcon>
            <StatusIcon label="Sign in" color="#999"><circle cx="6" cy="4.500" r="1.800" fill="#888" /><path d="M2.500 9c1-3 6-3 7 0z" fill="#888" /></StatusIcon>
          </div>
          <span className="w-px h-1.5 mx-[7px] bg-[#bbb]" />
          <span>Preview mode - Change of parameters will be reflected</span>
          <span className="w-px h-1.5 ml-auto mr-2 bg-[#bbb]" />
          <label htmlFor="vcb" className="mr-1.5">Offset</label>
          <input id="vcb" defaultValue="~ 29,7cm" className="w-[133px] h-[15px] mt-px px-0.5 bg-white border border-[#bbb]" />
        </div>
        <div className="h-[26px] bg-black text-center font-['Open_Sans',sans-serif] text-[15px] leading-[26px] text-[#e8a43c]">
          <a href="http://www.evrencavusoglu.com">www.evrencavusoglu.com</a>
        </div>
      </footer>
    </div>
  );
}
